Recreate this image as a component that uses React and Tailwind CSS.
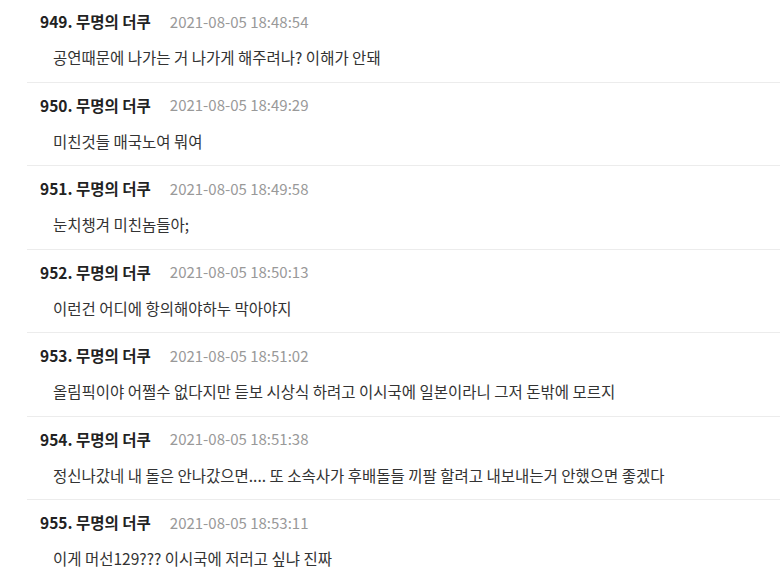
const comments = [
  { no: 949, date: '2021-08-05 18:48:54', text: '공연때문에 나가는 거 나가게 해주려나? 이해가 안돼' },
  { no: 950, date: '2021-08-05 18:49:29', text: '미친것들 매국노여 뭐여' },
  { no: 951, date: '2021-08-05 18:49:58', text: '눈치챙겨 미친놈들아;' },
  { no: 952, date: '2021-08-05 18:50:13', text: '이런건 어디에 항의해야하누 막아야지' },
  { no: 953, date: '2021-08-05 18:51:02', text: '올림픽이야 어쩔수 없다지만 듣보 시상식 하려고 이시국에 일본이라니 그저 돈밖에 모르지' },
  { no: 954, date: '2021-08-05 18:51:38', text: '정신나갔네 내 돌은 안나갔으면.... 또 소속사가 후배돌들 끼팔 할려고 내보내는거 안했으면 좋겠다' },
  { no: 955, date: '2021-08-05 18:53:11', text: '이게 머선129??? 이시국에 저러고 싶냐 진짜' },
]

export default function App() {
  return (
    <div
      className="w-[780px] h-[575px] overflow-hidden bg-white"
      style={{ fontFamily: '"Noto Sans CJK KR", "Noto Sans", sans-serif' }}
    >
      <ul className="-mt-[1px] pl-[27px]">
        {comments.map((c) => (
          <li key={c.no} className="pt-[13px] pb-[13.5px] border-b border-[#ececec]">
            <div className="flex items-center h-[20px] pl-[13px]">
              <span className="text-[15.5px] font-bold text-[#222]">
                {c.no}. 무명의 더쿠
              </span>
              <span className="ml-[19px] text-[15px] text-[#999]">{c.date}</span>
            </div>
            <p className="mt-[14px] h-[22px] leading-[22px] pl-[26px] text-[15.5px] text-[#333]">
              {c.text}
            </p>
          </li>
        ))}
      </ul>
    </div>
  )
}
